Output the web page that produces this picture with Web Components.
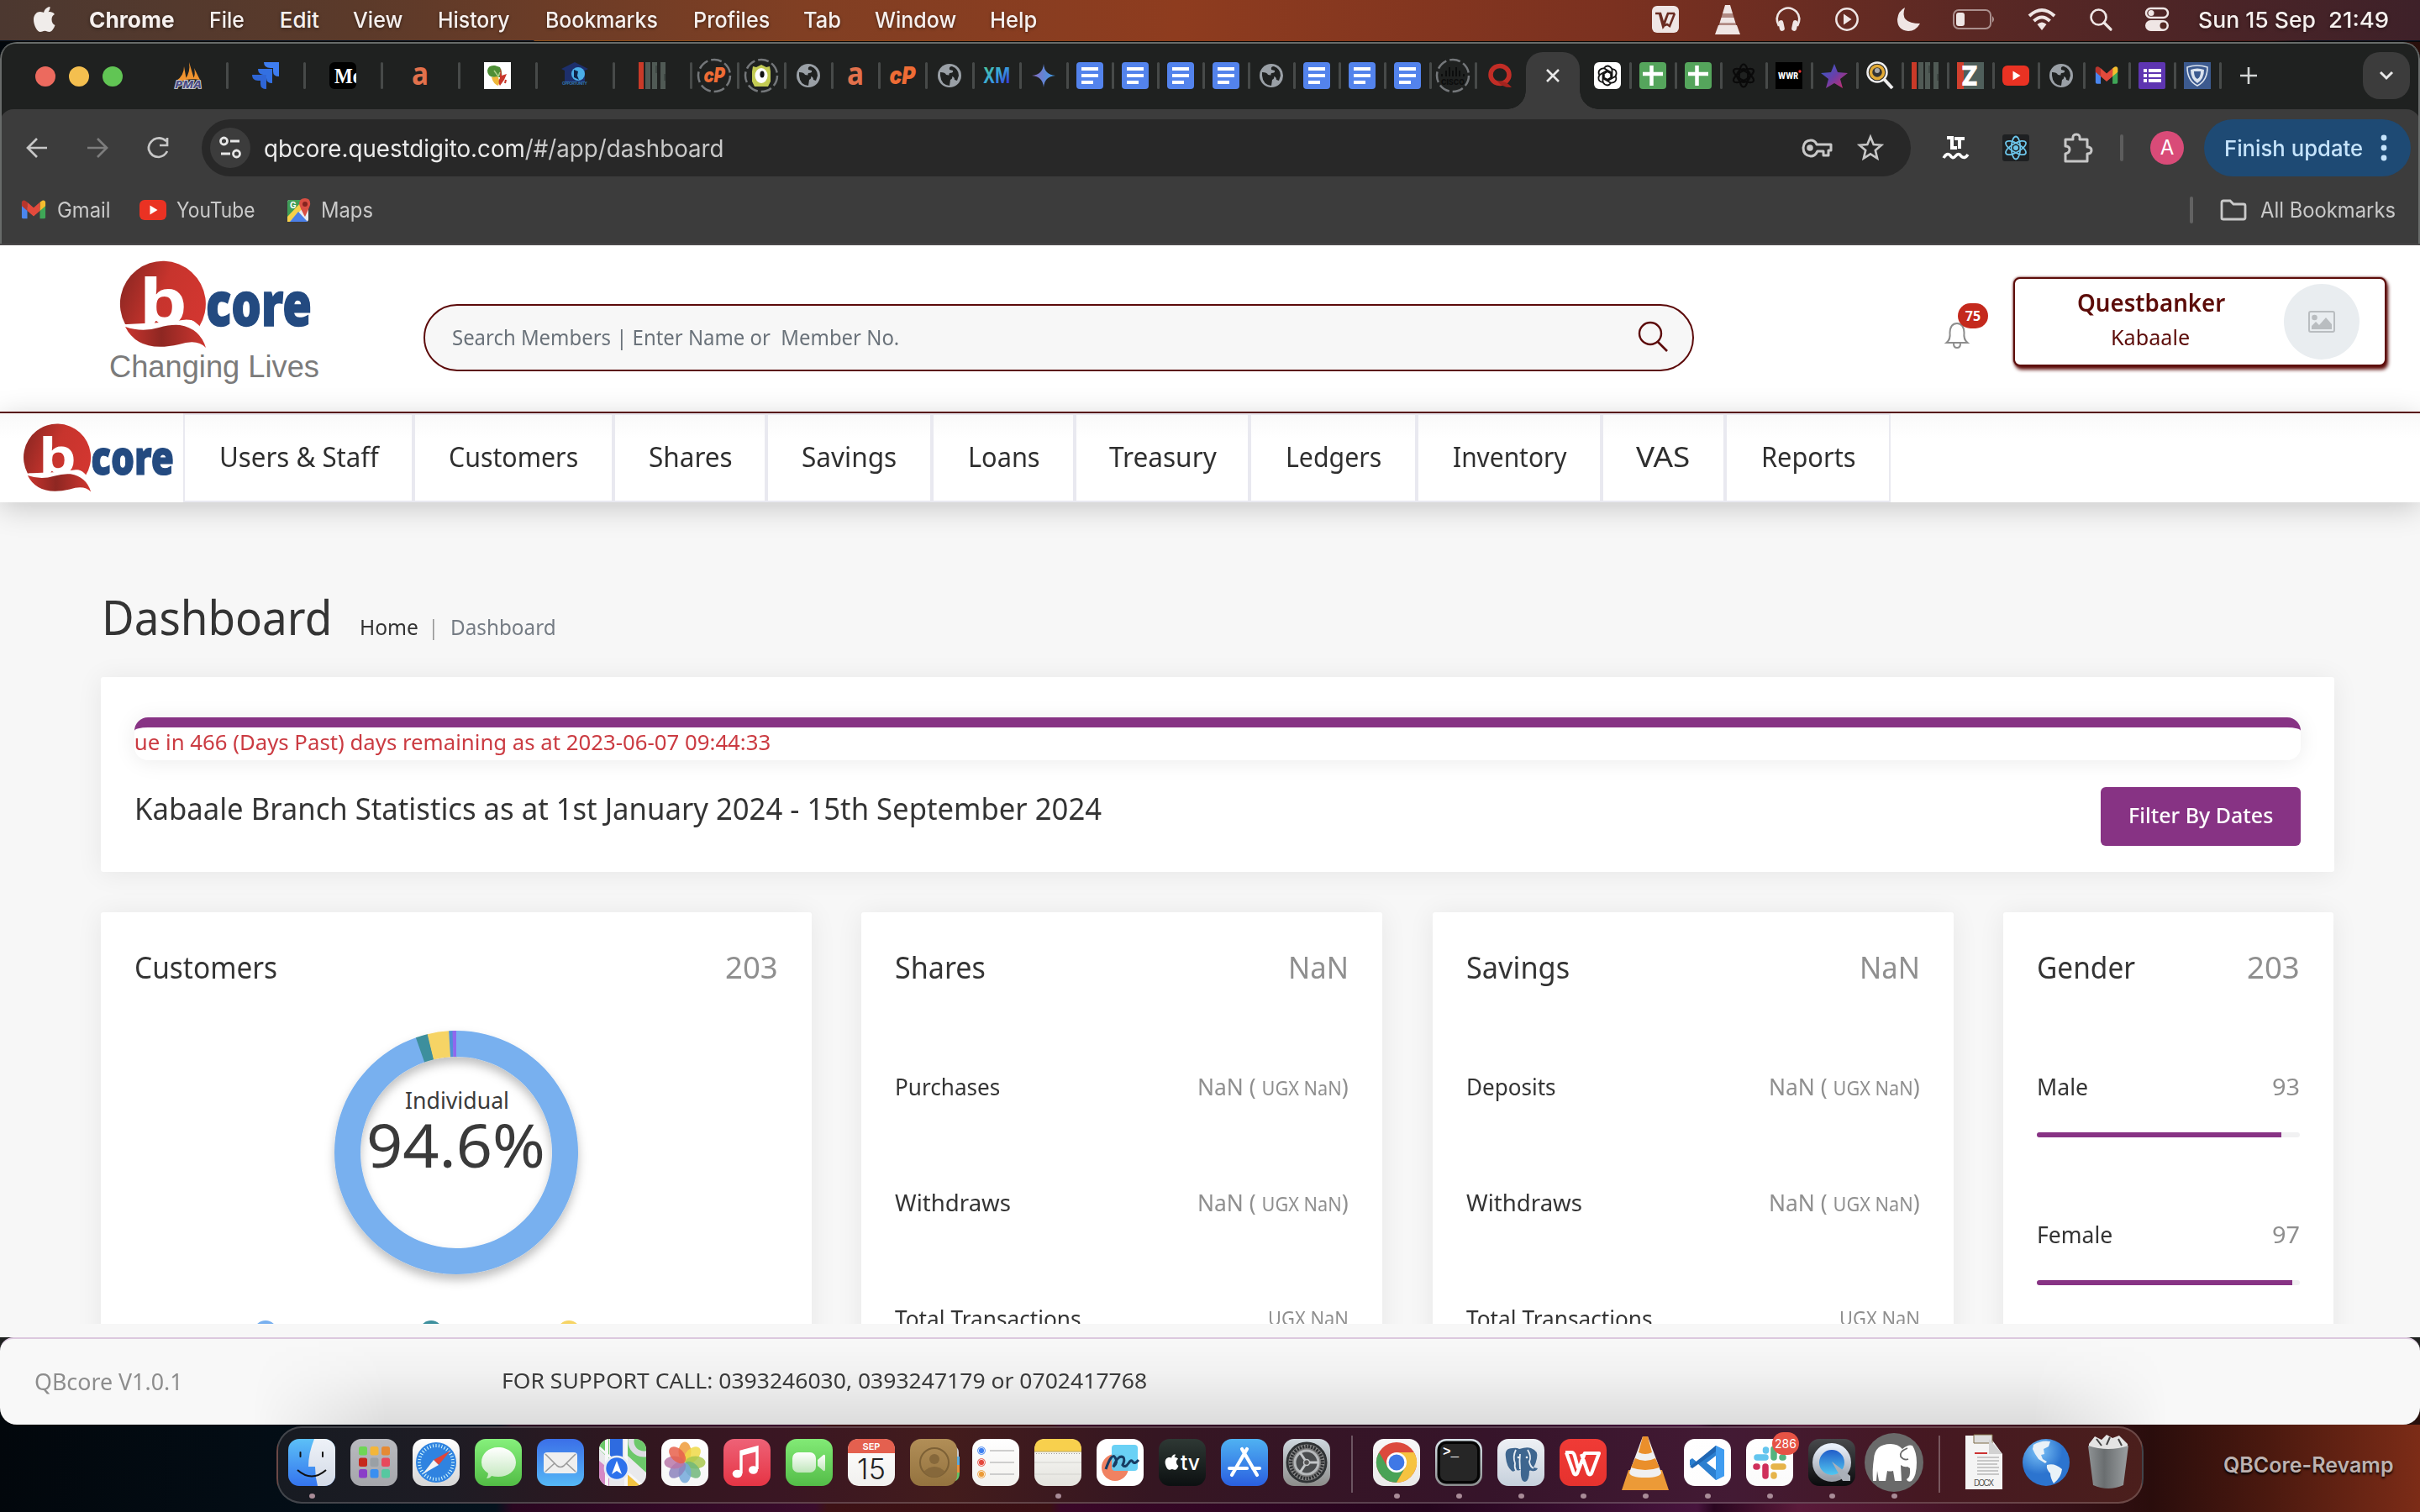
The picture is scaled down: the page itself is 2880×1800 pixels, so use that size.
<!DOCTYPE html>
<html lang="en">
<head>
<meta charset="utf-8">
<title>QBcore Dashboard</title>
<style>
html,body{margin:0;padding:0}
body{width:2880px;height:1800px;overflow:hidden;background:#08090f;font-family:"Noto Sans","Open Sans",sans-serif}
</style>
</head>
<body>
<mac-desktop></mac-desktop>
<script>
const UI='Inter,"Liberation Sans",sans-serif';
const PG='"Noto Sans","Open Sans",sans-serif';

/* ---------- helpers ---------- */
function svg(w,h,body,vb){return `<svg width="${w}" height="${h}" viewBox="${vb||`0 0 ${w} ${h}`}" style="display:block;flex:none;overflow:visible">${body}</svg>`}
/* text whose ink runs from x1 to x2 */
function T(text,x1,x2,size,extra=''){const b=size*.045;return {x:x1-b,w:x2-x1+b*1.7,html:(m,w)=>`<fit-text w="${w.toFixed(1)}" style="margin-left:${m.toFixed(1)}px;font-size:${size}px;${extra}">${text}</fit-text>`}}
function G(cx,w,html){return {x:cx-w/2,w,html:(m)=>`<div style="flex:none;width:${w}px;margin-left:${m}px">${html}</div>`}}
function row(items,start=0){let c=start,o='';for(const i of items){o+=i.html(i.x-c,i.w);c=i.x+i.w}return o}
function define(name,css,html,after){
  customElements.define(name,class extends HTMLElement{
    connectedCallback(){
      if(this.shadowRoot)return;
      const r=this.attachShadow({mode:'open'});
      r.innerHTML=`<style>:host{display:block;box-sizing:border-box}*{box-sizing:border-box}${css}</style>`+(typeof html==='function'?html(this):html);
      if(after)after(this,r);
    }
  });
}

/* ---------- fitted text ---------- */
define('fit-text',`:host{flex:none;white-space:pre}span{display:inline-block;transform-origin:0 50%}`,
 '<span><slot></slot></span>',
 (h,r)=>{const w=+h.getAttribute('w');h.style.width=w+'px';const s=r.querySelector('span');const n=s.offsetWidth;if(n)s.style.transform=`scaleX(${(w/n).toFixed(4)})`;});

/* ---------- glyph library ---------- */
const gmail=`<path d="M1 5v20q0 2 2 2h5V13z" fill="#4a86ee"/><path d="M31 5v20q0 2-2 2h-5V13z" fill="#3fa757"/><path d="M24 6l3-2q4-1 4 3v4l-7 6z" fill="#f5bd2e"/><path d="M8 6L5 4Q1 3 1 7v4l7 6z" fill="#b8352c"/><path d="M8 6l8 7 8-7v11l-8 7-8-7z" fill="#e34a3c"/>`;
const yt=`<rect x="0" y="4" width="32" height="24" rx="6" fill="#ea3223"/><path d="M12.500 10.500v11l9-5.500z" fill="#fff"/>`;
const doc=`<rect width="32" height="32" rx="4" fill="#5383ec"/><path d="M6 8h20M6 16h20M6 24h14" stroke="#fff" stroke-width="4"/>`;
const sheet=`<rect width="32" height="32" rx="4" fill="#55a55c"/><path d="M4 14h24M14.500 4v24" stroke="#fff" stroke-width="4.500"/>`;
const globe=`<circle cx="16" cy="16" r="14" fill="#9aa0a6"/><path d="M5 12q6 0 7 3l6 1q3 3-1 5l-1 7q-10-1-11-12zM19 5q8 3 8 11l-2 6-3-1q0-4-4-4-4-1-2-4 5 0 4-3l-4-1q-1-4 3-4z" fill="#1f2120"/>`;
const cp=`<text x="16" y="26" text-anchor="middle" textLength="31" lengthAdjust="spacingAndGlyphs" font-family="Inter" font-weight="900" font-style="italic" font-size="29" fill="#ee6c35">cP</text>`;
const aa=`<text x="16" y="27" text-anchor="middle" textLength="20" lengthAdjust="spacingAndGlyphs" font-family="Noto Sans" font-weight="700" font-size="38" fill="#e2714c">a</text>`;
const bars=`<rect width="6" height="32" fill="#c93a28"/><path d="M11 0v32M19 0v32M29 0v32" stroke="#505a55" stroke-width="6"/><path d="M21 4v9M31 14v8" stroke="#3f4844" stroke-width="2"/>`;
const dash=`<circle cx="16" cy="16" r="19" fill="none" stroke="#74777a" stroke-width="2.500" stroke-dasharray="13 4"/>`;
let gpt='';for(let i=0;i<6;i++)gpt+=`<path transform="rotate(${i*60} 16 16)" d="M12 7q3-4 7-1.500 3 2 2.500 5v7l-5 3" fill="none" stroke="#111" stroke-width="1.800"/>`;
const atom=(c,w=2)=>[0,60,120].map(a=>`<ellipse cx="16" cy="16" rx="13.500" ry="5.300" transform="rotate(${a+30} 16 16)" fill="none" stroke="${c}" stroke-width="${w}"/>`).join('');
const F={
 pma:`<path d="M2 22Q11 16 11 5l3 17zM12 21Q19 12 17 0l6 20zM22 20q3-6 1-13l7 14z" fill="#f0932f"/><text x="16" y="31" text-anchor="middle" textLength="32" lengthAdjust="spacingAndGlyphs" font-family="Noto Sans" font-weight="800" font-style="italic" font-size="13" fill="#4b4d87" stroke="#ddd" stroke-width="1.600" paint-order="stroke">PMA</text>`,
 jira:`<path d="M14 0h18v17q-7 0-7-6V7h-3q-8 0-8-7z" fill="#3e7df0"/><path d="M7 8h17v17q-7 0-7-6v-4h-4Q7 14 7 8z" fill="#3370e2"/><path d="M0 15h17v17q-7 0-7-6v-4H7q-7 0-7-7z" fill="#2f66d6"/>`,
 me:`<rect width="32" height="32" rx="6" fill="#000"/><svg width="32" height="32"><text x="6" y="25" font-family="Liberation Serif" font-weight="700" font-size="26" textLength="32" lengthAdjust="spacingAndGlyphs" fill="#fff">Me</text></svg>`,
 a:aa,
 map:`<rect width="32" height="32" fill="#fff"/><path d="M4 10Q5 3 13 4l6 2q3 6 2 12l-9 0q-8-1-8-8z" fill="#4d8f35"/><path d="M9 18l7-1q4 6 1 11-6-2-8-10z" fill="#efb83a"/><path d="M20 7l1 9 6-2-3 7-5 7q-3-5 0-9-1-6 1-12z" fill="#c9372a"/><path d="M12 10l5 7 2-5" stroke="#a9cf88" stroke-width="1.500" fill="none"/><path d="M25 25l1-4" stroke="#c9372a" stroke-width="2"/>`,
 sb:`<path d="M0 8L16 0l16 8-4 2v14H4V10z" fill="#1d2f6b"/><circle cx="20" cy="14" r="8" fill="#4aaee6"/><path d="M15 9l5 2-1 5 2 5-6-3z" fill="#102449"/><text x="16" y="27" text-anchor="middle" font-family="Inter" font-size="5" font-weight="700" textLength="30" fill="#2f6fae">OPPORTUNITY</text>`,
 bars,
 cpc:dash+`<g transform="translate(3 3) scale(.82)">${cp}</g>`,
 alien:dash+`<path d="M6 5l4 1 6-3 6 3 4-1 1 6v12l-3 6H8l-3-6V11z" fill="#c3cb53"/><ellipse cx="16" cy="16" rx="7.500" ry="9" fill="#fff"/><ellipse cx="17" cy="14.500" rx="2.600" ry="4" fill="#111"/>`,
 globe,cp,
 xm:`<defs><linearGradient id="xg" x1="0" y1="0" x2="1" y2="1"><stop offset="0" stop-color="#4fd08d"/><stop offset=".5" stop-color="#38a5e0"/><stop offset="1" stop-color="#3617d8"/></linearGradient></defs><text x="0" y="25" textLength="32" lengthAdjust="spacingAndGlyphs" font-family="Inter" font-weight="700" font-size="25" fill="url(#xg)">XM</text>`,
 gem:`<defs><linearGradient id="ge"><stop offset="0" stop-color="#8a6ac0"/><stop offset="1" stop-color="#3c9ee8"/></linearGradient></defs><path d="M16 2Q17 15 30 16 17 17 16 30 15 17 2 16 15 15 16 2z" fill="url(#ge)"/>`,
 doc,
 cisco:dash+`<path d="M3 14v3M8 10v7M12 6v11M16 10v7M20 6v11M24 10v7M29 14v3" stroke="#0c0d0d" stroke-width="2"/><text x="16" y="27" text-anchor="middle" textLength="28" lengthAdjust="spacingAndGlyphs" font-family="Inter" font-weight="800" font-size="9" fill="#0c0d0d">CISCO</text>`,
 q:`<ellipse cx="15" cy="15" rx="11" ry="10.500" fill="none" stroke="#c22d26" stroke-width="5.500"/><path d="M12 23q10-2 17 7-10 1-17-7z" fill="#a3241f"/>`,
 gpt:`<rect width="32" height="32" rx="6" fill="#fff"/>${gpt}`,
 sheet,
 atomd:atom('#0a0a0a',2.2)+`<circle cx="16" cy="16" r="8" fill="none" stroke="#0a0a0a" stroke-width="2"/>`,
 wwr:`<rect width="32" height="32" fill="#000"/><text x="3" y="20" textLength="24" lengthAdjust="spacingAndGlyphs" font-family="Inter" font-weight="800" font-size="11" fill="#fff">WWR</text><circle cx="29" cy="11" r="1.700" fill="#e33"/>`,
 star:`<defs><linearGradient id="st" x1="0" y1="0" x2="1" y2="1"><stop offset="0" stop-color="#2d5fd0"/><stop offset=".5" stop-color="#6a3fa8"/><stop offset="1" stop-color="#d62a62"/></linearGradient></defs><path d="M16 2l4 10 12 1-9 7 3 11-10-6-10 6 3-11-9-7 12-1z" fill="url(#st)"/>`,
 mag:`<circle cx="13" cy="12" r="11.500" fill="#222" stroke="#eee" stroke-width="2.500"/><circle cx="13" cy="12" r="7.500" fill="#333" stroke="#e3ab36" stroke-width="3.500"/><circle cx="13" cy="10" r="3" fill="#aaa"/><path d="M21 20l10 11" stroke="#eee" stroke-width="4"/>`,
 z:`<rect width="32" height="32" fill="#4f5f5b"/><rect width="8" height="32" fill="#d0402e"/><text x="15" y="28" text-anchor="middle" textLength="20" lengthAdjust="spacingAndGlyphs" font-family="Inter" font-weight="900" font-size="33" fill="#fff">Z</text>`,
 yt,gmail:`<g transform="translate(2 2) scale(.88)">${gmail}</g>`,
 forms:`<rect width="32" height="32" rx="2" fill="#5e35b1"/><path d="M12 10h15M12 16h15M12 22h15" stroke="#fff" stroke-width="4"/><path d="M6 10h4M6 16h4M6 22h4" stroke="#fff" stroke-width="4"/>`,
 shield:`<rect width="32" height="32" fill="#3c5a8f"/><path d="M4 6q12-4 24 0 0 16-12 22Q4 22 4 6z" fill="none" stroke="#dbe3ee" stroke-width="1.600"/><path d="M8 9q8-3 16 0 0 11-8 16Q8 20 8 9z" fill="#dbe3ee"/><path d="M12 11h8q0 7-4 9-4-2-4-9z" fill="#3c5a8f"/>`
};
const appleP=`<path d="M18.500 8.200c1.500-1.800 2.200-3.900 2-6.200-2.200.2-4.300 1.400-5.600 3-1.300 1.500-2.100 3.700-1.800 5.900 2.100.1 4.100-1.100 5.400-2.700zM22.500 17c0-3 1.600-4.800 3.500-6-1.500-2.200-3.800-3-6-3-2.500 0-3.600 1.200-5.500 1.200S11 8 8.700 8C5 8 1 11.300 1 17.500 1 24 5.300 32 9 32c2 0 2.900-1.300 5.400-1.300s3.100 1.300 5.300 1.300c3 0 5.700-4.500 6.800-8-2.400-1-4-3.600-4-7z"/>`;

/* ---------- menu bar ---------- */
define('mac-menubar',`:host{height:48px;background:linear-gradient(90deg,#4c3830 0,#5b3a2a 420px,#813f23 960px,#8e3c1f 1400px,#7b3120 1920px,#5a2824 2350px,#3e2129 2880px);font-family:${UI};color:#f6f0ee;text-shadow:0 1px 4px #0007}
.r{display:flex;height:46px;align-items:center}`,()=>{
 const ic='#efe6e5';
 return `<div class="r">`+row([
 G(53,28,svg(28,34,`<g fill="#f0ecea">${appleP}</g>`)),
 T('Chrome',107,207,26,'font-weight:700'),T('File',250,290,26,'font-weight:500'),T('Edit',334,379,26,'font-weight:500'),T('View',421,478,26,'font-weight:500'),T('History',522,606,26,'font-weight:500'),T('Bookmarks',650,782,26,'font-weight:500'),T('Profiles',826,915,26,'font-weight:500'),T('Tab',957,1000,26,'font-weight:500'),T('Window',1042,1137,26,'font-weight:500'),T('Help',1179,1233,26,'font-weight:500'),
 G(1982,32,svg(32,32,`<rect width="32" height="32" rx="6" fill="${ic}"/><path d="M4 9h6l4 14 5-14h8M9 9l4 15 6-15M13 24l5-2 3 2 6-15" fill="none" stroke="#6a2c22" stroke-width="2.600"/>`)),
 G(2056,32,svg(32,36,`<path d="M13 1h6l3 10H10zM8.500 16h15l2 6.500h-19zM5 25h22l4 11H1z" fill="${ic}"/><path d="M10 11h12l1.500 5h-15zM6.500 22.500h19l1 3h-21z" fill="${ic}" opacity=".5"/>`)),
 G(2128,30,svg(30,30,`<path d="M4 23Q-1 13 5 6q10-9 20 0 6 7 1 17" fill="none" stroke="${ic}" stroke-width="2.600"/><rect x="4" y="16" width="6" height="13" rx="3" fill="${ic}" transform="rotate(-12 7 22)"/><rect x="20" y="16" width="6" height="13" rx="3" fill="${ic}" transform="rotate(12 23 22)"/>`)),
 G(2198,30,svg(30,30,`<circle cx="15" cy="15" r="12.700" fill="none" stroke="${ic}" stroke-width="2.500"/><path d="M11 8.500v13l9.500-6.500z" fill="${ic}"/>`)),
 G(2271,30,svg(30,30,`<path d="M11 1Q4 20 29 20 24 29 15 29 2 28 2 15 3 5 11 1z" fill="${ic}"/>`)),
 G(2349,50,svg(50,24,`<rect x="1" y="1" width="44" height="22" rx="6" fill="none" stroke="${ic}" stroke-opacity=".55" stroke-width="2"/><rect x="4" y="4" width="10" height="16" rx="3" fill="${ic}"/><path d="M47 8q4 4 0 8z" fill="${ic}" opacity=".6"/>`)),
 G(2430,34,svg(34,26,`<g fill="none" stroke="${ic}" stroke-width="4"><path d="M2 9q15-14 30 0"/><path d="M7.500 15q9.500-9 19 0"/></g><path d="M11.500 19q5.500-5 11 0L17 26z" fill="${ic}"/>`)),
 G(2500,28,svg(28,28,`<circle cx="11.500" cy="11.500" r="9" fill="none" stroke="${ic}" stroke-width="2.600"/><path d="M18 18l8 8" stroke="${ic}" stroke-width="3.200" stroke-linecap="round"/>`)),
 G(2567,30,svg(30,28,`<rect x="2" y="1" width="26" height="11" rx="5.500" fill="none" stroke="${ic}" stroke-width="2.500"/><circle cx="8" cy="6.500" r="3.500" fill="${ic}"/><rect x="1" y="15" width="28" height="13" rx="6.500" fill="${ic}"/><circle cx="22.500" cy="21.500" r="4" fill="#532823"/>`)),
 T('Sun 15 Sep',2617,2755,26,'font-weight:500'),T('21:49',2772,2842,26,'font-weight:500')])+`</div>`});

/* ---------- tab strip ---------- */
define('tab-item',`:host{flex:none;height:100%;display:flex;align-items:center;justify-content:center;position:relative;padding-bottom:2px}
:host([sep])::after{content:"";width:3px;height:32px;border-radius:2px;background:#474a49;position:absolute;right:-2px;top:22px}`,
 h=>svg(32,32,F[h.getAttribute('icon')]),h=>{h.style.width=h.getAttribute('w')+'px'});
define('chrome-tabs',`:host{height:78px;display:flex;background:#1f2120}
.l{width:178px;flex:none;display:flex;gap:16px;padding-left:42px;align-items:center}.l i{width:24px;height:24px;border-radius:50%}
.act{width:64px;height:68px;margin-top:10px;background:#3c3c3c;border-radius:20px 20px 0 0;flex:none;display:flex;align-items:center;justify-content:center;position:relative;padding-bottom:13px}
.act::before,.act::after{content:"";position:absolute;bottom:0;width:22px;height:22px}
.act::before{left:-22px;background:radial-gradient(circle at 0 0,transparent 21.500px,#3c3c3c 22px)}
.act::after{right:-22px;background:radial-gradient(circle at 100% 0,transparent 21.500px,#3c3c3c 22px)}
.plus{width:68px;display:flex;align-items:center;justify-content:center;padding-bottom:2px}
.dd{width:56px;height:56px;border-radius:20px;background:#3c3c3c;margin:10px 12px 0 auto;display:flex;align-items:center;justify-content:center}`,()=>{
 const t=(n,w,s=1)=>`<tab-item icon="${n}" w="${w}" ${s?'sep':''}></tab-item>`;
 return `<div class="l"><i style="background:#ec6a5e"></i><i style="background:#f4bf4f"></i><i style="background:#61c554"></i></div>`
 +['pma','jira','me','a','map','sb','bars'].map(n=>t(n,92)).join('')
 +['cpc','alien','globe','a','cp','globe','xm','gem'].map(n=>t(n,56)).join('')
 +['doc','doc','doc','doc','globe','doc','doc','doc','cisco'].map(n=>t(n,54)).join('')
 +t('q',60,0)+`<div class="act">${svg(16,16,'<path d="M1 1l14 14M15 1L1 15" stroke="#e8e8e8" stroke-width="2.600"/>')}</div>`
 +`<div style="width:6px"></div>`+t('gpt',54)
 +['sheet','sheet','atomd','wwr','star','mag','bars','z','yt','globe','gmail','forms','shield'].map(n=>t(n,54)).join('')
 +`<div class="plus">${svg(20,20,'<path d="M10 0v20M0 10h20" stroke="#d4d6d5" stroke-width="2.600"/>')}</div><div class="dd">${svg(16,10,'<path d="M1 1l7 7 7-7" fill="none" stroke="#e8e8e8" stroke-width="3"/>')}</div>`});

/* ---------- toolbar ---------- */
define('chrome-toolbar',`:host{height:92px;background:#3c3c3c;border-radius:16px 16px 0 0;display:flex;align-items:center;font-family:${UI}}
.omni{height:68px;width:2034px;margin-left:13px;background:#282828;border-radius:34px;display:flex;align-items:center;flex:none}
.site{width:48px;height:48px;border-radius:50%;background:#3c3c3c;display:flex;align-items:center;justify-content:center}
.av{width:40px;height:40px;border-radius:50%;background:#d94b78;color:#fff;font-size:24px;line-height:40px;text-align:center;margin-left:32px;flex:none}
.up{width:246px;height:68px;border-radius:34px;background:#1e4a74;color:#c5e3fb;display:flex;align-items:center;margin-left:24px;flex:none}
.sp{width:26px;flex:none}`,()=>{
 const c='#c7c7c7';
 return row([
 G(44,26,svg(26,26,`<path d="M25 13H3M13 2L2 13l11 11" fill="none" stroke="${c}" stroke-width="2.700"/>`)),
 G(116,26,svg(26,26,`<path d="M1 13h22M13 2l11 11-11 11" fill="none" stroke="#7d7d7d" stroke-width="2.700"/>`)),
 G(188,26,svg(26,26,`<path d="M23 5q-7-6-15-2Q1 8 2 15q3 9 12 9 7-1 10-7M24 1v9h-9" fill="none" stroke="${c}" stroke-width="2.700"/>`))])
 +`<div class="sp"></div><div class="omni">`+row([
 G(34,48,`<div class="site">${svg(26,26,`<g fill="none" stroke="#e6e6e6" stroke-width="2.800"><circle cx="5.500" cy="5" r="4"/><path d="M13 5h11M2 20h11"/><circle cx="20.500" cy="20" r="4"/></g>`)}</div>`),
 T('qbcore.questdigito.com<span style="color:#c9c9c9">/#/app/dashboard</span>',75,620,29,'color:#ececec'),
 G(1922,36,svg(36,22,`<g fill="none" stroke="${c}" stroke-width="3"><path d="M18 7h17v7h-3v6h-6v-5h-7q-3 6-8 6-9-1-9-10 1-9 9-9 5 0 7 5z" stroke-linejoin="round"/></g><circle cx="10" cy="11" r="3.800" fill="${c}"/>`)),
 G(1986,32,svg(32,32,`<path d="M16 3l3.700 9 9.300.7-7.200 6.200 2.300 9.600-8.100-5.200-8.100 5.200 2.300-9.600L3 12.700l9.300-.7z" fill="none" stroke="${c}" stroke-width="2.600"/>`))])+`</div>`
 +row([
 G(2326,32,svg(32,32,`<path d="M6 4h6v12h6M15 5h12M21 5v12" stroke="#fff" stroke-width="4" fill="none"/><path d="M2 28q4-7 8-3 3 5 6 1 4-5 7 0 4 4 8-2" fill="none" stroke="#fff" stroke-width="3.500"/>`)),
 G(2398,32,svg(32,32,`<rect width="32" height="32" rx="3" fill="#1e2022"/>${atom('#6cc5ea',1.8).replace(/\+30/g,'')}<circle cx="16" cy="16" r="3" fill="#6cc5ea"/>`)),
 G(2471,36,svg(36,36,`<path d="M4 8h9q-1-6 4-6t4 6h9v9q5 0 5 4t-5 4v9H4v-9q5-1 5-5t-5-4z" fill="none" stroke="${c}" stroke-width="3" stroke-linejoin="round"/>`)),
 G(2524,4,`<div style="height:32px;background:#5d5d5d;border-radius:2px"></div>`)],2273)
 +`<div class="av">A</div><div class="up">`+row([T('Finish update',25,188,26,'font-weight:500'),G(214,8,svg(8,32,'<g fill="#c5e3fb"><circle cx="4" cy="4" r="3.400"/><circle cx="4" cy="16" r="3.400"/><circle cx="4" cy="28" r="3.400"/></g>'))])+`</div>`});

/* ---------- bookmarks ---------- */
define('bookmarks-bar',`:host{height:70px;background:#3c3c3c;border-bottom:2px solid #4a4849;padding-bottom:13px;display:flex;align-items:center;font-family:${UI};color:#c9c9c9}`,
 ()=>row([
 G(40,30,svg(30,30,gmail,'0 0 32 32')),T('Gmail',69,131,25),G(182,32,svg(32,32,yt)),T('YouTube',211,303,25),
 G(355,28,svg(28,30,`<rect x="1" y="3" width="25" height="26" rx="3" fill="#e9ecef"/><path d="M1 20V6q0-3 3-3h17L1 25z" fill="#3f9d57"/><path d="M1 29v-6L18 5l4 5L4 29z" fill="#f7d14a"/><path d="M4 29l10-12 11 12z" fill="#4a7fe8"/><path d="M15 8q0-7 7-7t6 8q-2 6-6 14-5-8-7-15z" fill="#d94f43"/><circle cx="22" cy="8" r="3" fill="#85241f"/><text x="4" y="13" font-size="10" font-family="Inter" font-weight="700" fill="#fff">G</text>`)),
 T('Maps',383,443,25),G(2608,4,`<div style="height:32px;background:#626262;border-radius:2px"></div>`),
 G(2658,32,svg(32,26,`<path d="M2 23V4q0-2 2-2h8l4 4h12q2 0 2 2v14q0 2-2 2H4q-2 0-2-1z" fill="none" stroke="#c9c9c9" stroke-width="2.800"/>`)),T('All Bookmarks',2691,2850,25)]));

/* ---------- brand logo ---------- */
define('brand-logo',`:host{flex:none;line-height:0}`,h=>{
 const s=+h.getAttribute('scale')||1,tag=h.hasAttribute('tagline');
 return svg(254*s,(tag?160:110)*s,`<defs><linearGradient id="g1" x1="0" y1=".3" x2="1" y2=".6"><stop offset="0" stop-color="#8c2722"/><stop offset=".5" stop-color="#c7342d"/><stop offset="1" stop-color="#d23630"/></linearGradient><linearGradient id="g2"><stop offset="0" stop-color="#c9342e"/><stop offset=".45" stop-color="#8e2722"/><stop offset="1" stop-color="#cf3630"/></linearGradient></defs>
 <path d="M24 81A51 51 0 1 1 112 84Q105 74 98 76Q70 84 24 81z" fill="url(#g1)"/>
 <text x="41" y="81" font-family="Noto Sans" font-weight="700" font-size="75" textLength="57" lengthAdjust="spacingAndGlyphs" fill="#fff">b</text>
 <path d="M26 81l20-1q26-1 46-4 15-3 23 11l-4 9Q98 80 80 85 50 92 26 82z" fill="#fff"/>
 <path d="M24 84q20 7 40 1 14-4 25-3 24 4 31 27-10-11-32-4Q40 116 24 84z" fill="url(#g2)"/>
 <text x="120" y="83" textLength="126" lengthAdjust="spacingAndGlyphs" font-family="Noto Sans" font-weight="900" font-size="73" fill="#234a80" stroke="#234a80" stroke-width="1.500">core</text>
 ${tag?`<text x="5" y="144" textLength="250" lengthAdjust="spacingAndGlyphs" font-family="Liberation Sans" font-size="36" fill="#7b7b7b">Changing Lives</text>`:''}`,`0 0 254 ${tag?160:110}`)});

/* ---------- page header ---------- */
define('user-card',`:host{width:444px;height:106px;border:2px solid #5d0d0a;border-radius:8px;background:#fff;box-shadow:2px 4px 4px #5d0d0a,0 0 3px #5d0d0a;display:flex;color:#5c0c09;flex:none}
.n{width:320px;padding-top:8px}.row{display:flex;line-height:41px}
.av{width:90px;height:90px;border-radius:50%;background:#e9edf0;margin:6px 0 0 0;display:flex;align-items:center;justify-content:center}`,
 ()=>`<div class="n"><div class="row">${row([T('Questbanker',75,249,28,'font-weight:600')])}</div><div class="row">${row([T('Kabaale',115,207,26)])}</div></div>
 <div class="av">${svg(32,26,'<rect x="1" y="1" width="30" height="24" rx="2" fill="none" stroke="#b9bdc0" stroke-width="2"/><circle cx="7.500" cy="8" r="3.300" fill="#b9bdc0"/><path d="M4 22v-4l5-5 4 4 8-9 7 8v6z" fill="#b9bdc0"/>')}</div>`);
define('bank-header',`:host{height:200px;background:#fff;border-bottom:2px solid #5c0a0a;display:flex}
brand-logo{margin:13px 0 0 125px}
.s{width:1512px;height:80px;border:2px solid #5c0a0a;border-radius:40px;background:#f7f7f7;margin:70px 0 0 125px;display:flex;align-items:center;color:#6a727a;flex:none;padding-bottom:2px}
.bell{width:60px;margin:66px 0 0 299px;position:relative;flex:none}
.bell svg{margin:24px 0 0 0}.badge{position:absolute;left:15px;top:3px;width:36px;height:30px;border-radius:15px;background:#c4291d;color:#fff;font-weight:700;font-size:16px;line-height:30px;text-align:center}
user-card{margin:38px 0 0 21px}`,
 ()=>`<brand-logo tagline></brand-logo><div class="s">${row([T('Search Members | Enter Name or  Member No.',33,563,25),G(1462,38,svg(38,38,'<circle cx="15" cy="15" r="13" fill="none" stroke="#5c0a0a" stroke-width="2.400"/><path d="M24 25l11 11" stroke="#5c0a0a" stroke-width="2.600"/>'))])}</div>
 <div class="bell">${svg(28,34,'<path d="M1.500 26q5-4 4-12Q6 3 14 3t8.500 11q-1 8 4 12zM10 27q0 5 4 5t4-5" fill="none" stroke="#8d8d8d" stroke-width="2"/>')}<div class="badge">75</div></div><user-card></user-card>`);

/* ---------- navigation ---------- */
define('nav-item',`:host{height:106px;border:2px solid #e9e9f0;flex:none;display:flex;line-height:100px;color:#2f2f2f}`,'<slot></slot>');
define('bank-nav',`:host{height:106px;background:linear-gradient(#f9f9f9,#fff 30px);display:flex;box-shadow:0 6px 34px rgba(0,0,0,.2);position:relative;z-index:2}
.lg{width:218px;padding:8px 0 0 14px;flex:none}`,()=>{
 const n=[['Users &amp; Staff',218,492,262,449],['Customers',492,730,535,687],['Shares',730,912,773,870],['Savings',912,1109,955,1066],['Loans',1109,1279,1153,1236],['Treasury',1279,1487,1321,1446],['Ledgers',1487,1686,1531,1643],['Inventory',1686,1906,1730,1863],['VAS',1906,2053,1948,2010],['Reports',2053,2250,2097,2207]];
 return `<div class="lg"><brand-logo scale=".785"></brand-logo></div>`+n.map(a=>`<nav-item style="width:${a[2]-a[1]}px">${row([T(a[0],a[3]-a[1]-2,a[4]-a[1]-2,32)])}</nav-item>`).join('')});

/* ---------- dashboard ---------- */
define('panel-card',`:host{background:#fff;border-radius:3px;box-shadow:0 2px 32px rgba(0,0,0,.07);padding:42px 40px 0;flex:none}`,'<slot></slot>');
define('stat-row',`:host{display:flex;justify-content:space-between;height:40px;line-height:40px;color:#8f8f8f}`,
 '<slot name="l"></slot><slot name="r"></slot>');
define('meter-bar',`:host{height:6px;border-radius:3px;background:#f1f1f2;overflow:hidden;margin:35px 0 95px}div{height:6px;background:#873384}`,h=>`<div style="width:${h.getAttribute('v')}%"></div>`);
define('donut-chart',`:host{height:400px;overflow:hidden}`,()=>{
 const C=[383,196],p=(a,r)=>{const t=a*Math.PI/180;return (C[0]+r*Math.sin(t)).toFixed(2)+' '+(C[1]-r*Math.cos(t)).toFixed(2)};
 const seg=(a,b,c)=>`<path d="M${p(a,145)}A145 145 0 ${b-a>180?1:0} 1 ${p(b,145)}L${p(b,114)}A114 114 0 ${b-a>180?1:0} 0 ${p(a,114)}z" fill="${c}"/>`;
 return svg(766,400,`<defs><filter id="sh" x="-20%" y="-20%" width="140%" height="140%"><feDropShadow dx="0" dy="7" stdDeviation="6" flood-opacity=".25"/></filter></defs><g filter="url(#sh)">${seg(0,341,'#78b0ef')}${seg(340.6,346.5,'#3d8f9d')}${seg(346.3,356.6,'#f6d465')}${seg(356.5,358.4,'#4f90d6')}${seg(358.2,360,'#8f68ee')}</g>
 <g fill="#3a3a3a" font-family='${PG}'><text x="322" y="144" font-size="28" textLength="124" lengthAdjust="spacingAndGlyphs">Individual</text><text x="276" y="214" font-size="72" textLength="213" lengthAdjust="spacingAndGlyphs">94.6%</text></g>
 <circle cx="156" cy="410" r="14" fill="#78b0ef" /><circle cx="353" cy="410" r="14" fill="#3d8f9d"/><circle cx="517" cy="410" r="14" fill="#f6d465"/>`)});
define('dash-board',`:host{height:994px;background:#f7f7f7;color:#343434}
.clip{height:978px;overflow:hidden}
.title{display:flex;align-items:baseline;padding-top:101px;height:208px;line-height:70px}
.info{margin-left:120px;width:2658px;height:232px;padding-top:48px}
.notice{height:51px;border-top:12px solid #873384;border-radius:16px;box-shadow:0 2px 26px rgba(0,0,0,.08);overflow:hidden;line-height:35px;color:#cb3b42;display:flex}
.tr{display:flex;justify-content:space-between;margin-top:33px;line-height:49px}
.btn{width:238px;height:70px;border-radius:6px;background:#873384;color:#fff;line-height:66px;display:flex;margin-top:-1px}
.cards{display:flex;margin:48px 0 0 120px;gap:59.3px}.cards panel-card{height:560px}
.hd{display:flex;justify-content:space-between;line-height:48px;height:48px;color:#8f8f8f}
.gap{height:97px}.gap2{height:98px}`,()=>{
 const f=(t,w,s,x='')=>`<fit-text w="${w}" style="font-size:${s}px;${x}">${t}</fit-text>`;
 const D='color:#343434';
 const hd=(a,aw,b,bw)=>`<div class="hd">${f(a,aw,36,D)}${f(b,bw,36)}</div>`;
 const sr=(a,aw,b,bw,bs=28)=>`<stat-row><fit-text slot="l" w="${aw}" style="font-size:28px;${D}">${a}</fit-text><fit-text slot="r" w="${bw}" style="font-size:${bs}px">${b}</fit-text></stat-row>`;
 const N='NaN ( <span style="font-size:23px">UGX NaN</span>)',g='<div class="gap"></div>',g2='<div class="gap2"></div>';
 const col=(w,t,tw,r,rw)=>`<panel-card style="width:${w}px">${hd(t,tw,'NaN',72)}${g}${sr(r,rw,N,180)}${g2}${sr('Withdraws',138,N,180)}${g2}${sr('Total Transactions',222,'UGX NaN',96,23)}</panel-card>`;
 return `<div class="clip"><div class="title">${row([T('Dashboard',123,393,56),T('Home',429,497,26),T('|',514,518,25),T('Dashboard',537,661,26,'color:#757c84')])}</div>
 <panel-card class="info"><div class="notice"><fit-text w="773" style="font-size:26px;margin-left:-16px">due in 466 (Days Past) days remaining as at 2023-06-07 09:44:33</fit-text></div>
 <div class="tr">${f('Kabaale Branch Statistics as at 1st January 2024 - 15th September 2024',1151,36)}<div class="btn">${row([T('Filter By Dates',34,204,25,'font-weight:500')])}</div></div></panel-card>
 <div class="cards"><panel-card style="width:846px">${hd('Customers',170,'203',63)}<donut-chart></donut-chart></panel-card>
 ${col(620,'Shares',108,'Purchases',125)}${col(620,'Savings',123,'Deposits',107)}
 <panel-card style="width:393px">${hd('Gender',117,'203',63)}${g}${sr('Male',61,'93',33)}<meter-bar v="93"></meter-bar>${sr('Female',90,'97',33)}<meter-bar v="97"></meter-bar></panel-card></div></div>`});

define('page-footer',`:host{height:104px;background:#f8f8f8;border-top:2px solid #dcc8de;border-radius:16px 16px 0 0;position:relative;overflow:hidden;line-height:40px;color:#3a3a3a}
.r{display:flex;padding-top:29px;position:relative}
.shade{position:absolute;left:300px;right:300px;top:0;bottom:0;background:linear-gradient(#0000,#00000007 40%,#0000001c);-webkit-mask-image:linear-gradient(90deg,#0000,#000 160px,#000 calc(100% - 160px),#0000)}`,
 ()=>`<div class="shade"></div><div class="r">${row([T('QBcore V1.0.1',42,216,28,'color:#8d8d8d;position:relative;top:1px'),T('FOR SUPPORT CALL: 0393246030, 0393247179 or 0702417768',598,1364,26)])}</div>`);

/* ---------- dock ---------- */
const lg=(id,a,b)=>`<linearGradient id="${id}" x1="0" y1="0" x2="0" y2="1"><stop offset="0" stop-color="${a}"/><stop offset="1" stop-color="${b}"/></linearGradient>`;
const tile=(a,b)=>`<defs>${lg('t',a,b)}</defs><rect width="56" height="56" rx="13" fill="url(#t)"/>`;
let ticks='';for(let i=0;i<36;i++)ticks+=`<path d="M28 6v4" stroke="#dff" stroke-width="1" transform="rotate(${i*10} 28 28)"/>`;
const petals=['#ef9b3a','#efd946','#a9c84e','#71b77a','#74a9db','#8c82bd','#b977a8','#e8604b'].map((c,i)=>`<ellipse cx="28" cy="15.500" rx="7.500" ry="12" fill="${c}" opacity=".85" transform="rotate(${i*45} 28 28)"/>`).join('');
const pad=['#6fd656','#f3b63a','#e58a34','#c6271c','#9aa0a5','#e8485c','#8a3dc8','#3a8ff0','#56c8a0'].map((c,i)=>`<rect x="${10+(i%3)*13.500}" y="${9+Math.floor(i/3)*13.500}" width="10" height="10.500" rx="2.500" fill="${c}"/>`).join('');
const A={
finder:`<defs>${lg('a','#5cc0f7','#3474ee')}${lg('b','#eef2f8','#d3dae6')}<clipPath id="c"><rect width="56" height="56" rx="13"/></clipPath></defs><g clip-path="url(#c)"><rect width="56" height="56" fill="url(#a)"/><path d="M31 0Q24 17 24 33h8q0 12 3 23h21V0z" fill="url(#b)"/></g><path d="M14.500 16v5M41 16v5" stroke="#111" stroke-width="2" stroke-linecap="round"/><path d="M11 37q17 15 34 0" fill="none" stroke="#111" stroke-width="2"/>`,
pad:tile('#b9babf','#a5a6ab')+pad,
safari:tile('#fff','#d6d6d6')+`<circle cx="28" cy="28" r="24" fill="#2f83e0"/>${ticks}<path d="M45 14L31 31l-6-6z" fill="#e0453a"/><path d="M12 42l13-17 6 6z" fill="#f3f3f3"/>`,
msg:tile('#86f07c','#52bd45')+`<defs>${lg('m','#fff','#c4e8be')}</defs><path d="M28 10c12 0 21 8 21 18s-9 17-21 17q-5 0-8-1-2 3-6 3 2-3 2-6-8-5-8-13C8 18 16 10 28 10z" fill="url(#m)"/>`,
mail:tile('#3b6fe8','#56b8f6')+`<rect x="8" y="16" width="40" height="25" rx="4" fill="#efefef"/><path d="M10 18l14 14q4 3 8 0l14-14M10 39l11-10M46 39L35 29" fill="none" stroke="#9a9a9a" stroke-width="1.600"/>`,
maps:`<defs><clipPath id="c"><rect width="56" height="56" rx="13"/></clipPath></defs><g clip-path="url(#c)"><rect width="56" height="56" fill="#e9e9ec"/><path d="M0 0h12v24L0 12zM34 0h22v40L34 20z" fill="#6cc86a"/><path d="M0 26l12 10v20H0z" fill="#d489c5"/><path d="M32 40l20 16H30z" fill="#f3c443"/><circle cx="53" cy="3" r="15" fill="none" stroke="#dcdce2" stroke-width="7"/><rect x="13" width="15" height="30" fill="#2e6be0"/><path d="M9 0v56M32 0v56" stroke="#f7f7f9" stroke-width="4"/><path d="M0 10l56 50" stroke="#f7f7f9" stroke-width="3"/></g><circle cx="21" cy="35" r="14" fill="#2d71ec" stroke="#e8ecf4" stroke-width="2.600"/><path d="M21 26l6 16-6-4-6 4z" fill="#fff"/>`,
photos:tile('#fff','#f6f6f6')+petals,
music:tile('#ee6277','#e63444')+`<path d="M21 41V15l19-5v26" fill="none" stroke="#fff" stroke-width="3.400"/><path d="M21 15l19-5v5l-19 5z" fill="#fff"/><ellipse cx="16.500" cy="41.500" rx="5.800" ry="4.800" fill="#fff"/><ellipse cx="35.500" cy="37" rx="5.500" ry="4.800" fill="#fff"/>`,
ft:tile('#82ea76','#54bd48')+`<defs>${lg('m','#fff','#c0e6bb')}</defs><rect x="8" y="16" width="28" height="24" rx="7" fill="url(#m)"/><path d="M38 25l7-6q2-1 2 2v15q0 3-2 2l-7-6z" fill="url(#m)"/>`,
cal:tile('#fff','#f1f0ee')+`<path d="M0 17V13Q0 0 13 0h30q13 0 13 13v4z" fill="#e4604f"/><text x="28" y="13" text-anchor="middle" font-family="Inter" font-size="11" font-weight="600" fill="#fff">SEP</text><text x="28" y="48" text-anchor="middle" font-family="Inter" font-size="34" font-weight="300" textLength="34" fill="#222">15</text>`,
contacts:`<path d="M50 8q8 1 8 8v24q0 8-8 10z" fill="#ccc"/><path d="M50 21h9v10h-9z" fill="#58a9dd"/><path d="M50 31h9v9h-9z" fill="#e8913a"/><path d="M50 40h9q0 8-5 10h-4z" fill="#64c466"/>`+tile('#b18e57','#94733f')+`<circle cx="29" cy="28" r="17" fill="none" stroke="#7d6136" stroke-width="2"/><circle cx="29" cy="24" r="6" fill="#86683b"/><path d="M16 39q13-12 26 0-13 13-26 0z" fill="#86683b"/>`,
rem:tile('#fff','#f2f1ee')+[['#3d7ff0',14],['#e4483d',28],['#eb9a35',42]].map(a=>`<circle cx="11" cy="${a[1]}" r="3.800" fill="${a[0]}" stroke="${a[0]}" stroke-width="2"/><circle cx="11" cy="${a[1]}" r="3.700" fill="none" stroke="#fff" stroke-width=".8"/><path d="M21 ${a[1]}h29" stroke="#c4c4c4" stroke-width="1.600"/>`).join(''),
notes:tile('#fbfbf9','#e4e3de')+`<path d="M0 15v-2Q0 0 13 0h30q13 0 13 13v2z" fill="#f8d04d"/><path d="M0 15h56" stroke="#bda456"/><path d="M0 28h56M0 42h56" stroke="#d4d3cf"/><path d="M2 17.500h52" stroke="#999" stroke-dasharray="1 2"/>`,
free:tile('#fff','#fff')+`<circle cx="22" cy="34" r="16" fill="#f08262"/><rect x="18" y="7" width="31" height="31" rx="4" fill="#5fcdf4" opacity=".93"/><path d="M11 36q7-20 11-14t-2 11q6-15 12-11 2 3-1 9 3 4 7-2 3-5 5-2 2 4 7-2" fill="none" stroke="#173c63" stroke-width="3"/>`,
tv:tile('#2e3834','#0c1011')+`<g fill="#fff" transform="translate(7 17) scale(.62)">${appleP}</g><text x="26" y="37" font-family="Inter" font-size="25" font-weight="500" textLength="23" lengthAdjust="spacingAndGlyphs" fill="#fff">tv</text>`,
store:tile('#4fb2f2','#2a5fe0')+`<g stroke="#fff" stroke-width="4.200" stroke-linecap="round" fill="none"><path d="M31 12L13 43M25 12l18 31M10 35h21M38 35h8"/></g>`,
set:tile('#cfd8df','#8c8c8a')+`<circle cx="28" cy="28" r="23" fill="#8d8d8d" stroke="#2f3234" stroke-width="3"/><circle cx="28" cy="28" r="19" fill="#777" stroke="#2b2d2f" stroke-width="4" stroke-dasharray="2 1.500"/><circle cx="28" cy="28" r="14" fill="#4a4c4e" stroke="#b5b8ba" stroke-width="3"/><path d="M28 28h14M28 28l-8-12M28 28l-8 12" stroke="#c3c6c8" stroke-width="3"/><circle cx="28" cy="28" r="3.500" fill="#555" stroke="#c3c6c8" stroke-width="1.500"/>`,
chrome:tile('#f8f8f8','#e9e9e9')+`<circle cx="28" cy="28" r="24" fill="#dc4a3d"/><path d="M7.200 16A24 24 0 0 0 28 52l10.400-18L17.600 34z" fill="#49a356"/><path d="M28 52A24 24 0 0 0 48.800 16H28l10.400 18z" fill="#f6c340"/><circle cx="28" cy="28" r="12" fill="#fff"/><circle cx="28" cy="28" r="9.400" fill="#3f78e6"/>`,
term:tile('#d9e4ea','#8d8f90')+`<rect x="2.500" y="2.500" width="51" height="51" rx="11" fill="#050505"/><rect x="6" y="6" width="44" height="44" rx="7" fill="#262626"/><text x="9" y="20" font-family="Liberation Mono" font-weight="700" font-size="16" fill="#fff">&gt;_</text>`,
pg:tile('#eef1f5','#c6d0dc')+`<path d="M10 22q-2-11 8-11 5-1 8 1 9-3 14-1 9 3 7 12-1 6-4 11l5 1q-2 4-7 3-2-1-3 0 0 12-5 13-6 0-5-15-3 3-6 0-2 4-5 2-6-5-7-16z" fill="#3e668f"/><path d="M22 13q-4 8-1 16-1 5 1 8M36 13q5 8 2 14 1 6 5 8M27 36q-1-10 0-18" fill="none" stroke="#e6ecf2" stroke-width="1.800"/><circle cx="25" cy="22" r="1.300" fill="#fff"/><circle cx="35" cy="22" r="1.300" fill="#fff"/>`,
wps:tile('#f03b36','#e6322e')+`<path d="M7 16h7q3 0 4 4l4 15M8 16l9 25q2 3 4 0l9-24h17l-9 24q-2 3-4 0l-8-23" fill="none" stroke="#fff" stroke-width="4.200" stroke-linejoin="round"/>`,
vlc:`<path d="M8 37h40l8 24H0z" fill="#ec9a37"/><path d="M25 -3h6l16 43q-1 6-19 6T9 40z" fill="#f0f0f0"/><path d="M25 -3h6l5 19q-8 4-16 0zM16 23q12 6 24 0l5 11q-17 6-34 0z" fill="#ea8f2b"/>`,
code:tile('#fff','#fdfdfd')+`<path d="M38 8l10 5v31l-10 5L16 29l-6 5-3-3V25l3-2 6 5z" fill="#2b7fd0"/><path d="M38 8L7 33l3 2 28-20z" fill="#1f66b3"/><path d="M38 8l10 5v31l-10 5z" fill="#3f9cf0"/><path d="M38 20v17L27 28.500z" fill="#fff"/>`,
slack:tile('#fff','#fbfbfb')+`<g stroke-width="7.500" stroke-linecap="round"><path d="M13 22h10M23.500 13v1" stroke="#63c5ee"/><path d="M33 12v10M43 22h1" stroke="#54b37f"/><path d="M33 33h11M33 43v1" stroke="#e6b44a"/><path d="M23 33v11M13 33h-1" stroke="#cf2f5b"/></g>`,
qt:tile('#48494c','#0a0b0d')+`<defs>${lg('q','#e8effa','#9aa0aa')}${lg('r','#1b4fc4','#58d5f5')}</defs><circle cx="28" cy="28" r="19" fill="url(#r)" stroke="url(#q)" stroke-width="8"/><path d="M28 27l22 17v6h-9z" fill="#aab0b9"/>`,
mamp:`<circle cx="28" cy="28" r="35" fill="#6a6a6a"/><path d="M4 24Q5 6 24 6q9 0 14 6 7-6 12-4 5 8 5 20 0 16-6 22-5 2-6-2 5-2 4-13l-3-2q-4 1-8-2l1 19h-8l-2-12q-4 1-7 0l-2 12h-8l-2-12-1 12h-4Q2 36 4 24z" fill="#fff"/><path d="M44 11q-10 4-8 10 4 5 9 3" fill="none" stroke="#6a6a6a" stroke-width="1.800"/>`,
docx:`<path d="M6 -4h28l16 22v42H6z" fill="#f4f4f4"/><path d="M16 -5h22v10H16z" fill="#ddd" stroke="#7c6a45" stroke-width="1"/><path d="M34 0l16 18H34z" fill="#d2d2d2"/><path d="M17 17h15" stroke="#c33" stroke-width="2"/><path d="M20 22h26M20 26h26M20 30h24M20 34h26M20 38h25M20 42h26" stroke="#999" stroke-width="1.200"/><text x="28" y="56" text-anchor="middle" font-family="Inter" font-size="10" textLength="24" fill="#555">DOCX</text>`,
earth:`<defs><radialGradient id="e" cx=".35" cy=".25"><stop offset="0" stop-color="#7cc4f8"/><stop offset="1" stop-color="#2c74cf"/></radialGradient></defs><circle cx="28" cy="28" r="28" fill="url(#e)"/><path d="M13 7q10-6 20-4l-2 6-6 3 1 6-4 1 2 5 5 3-2 2-8-5-4-6-3-6zM29 31q9-3 18 5-1 10-10 17-4-7-4-12-5-5-4-10z" fill="#e9f2f8"/>`,
trash:`<defs><linearGradient id="w"><stop offset="0" stop-color="#8e9294"/><stop offset=".4" stop-color="#6a6e70"/><stop offset="1" stop-color="#9b9fa1"/></linearGradient></defs><path d="M5 6L12-3l8 4 6-6 7 4 8-3 10 10v6H5z" fill="#e4e4e4"/><path d="M14 0l6 8M30-2l-4 9M40 0l4 8" stroke="#444" stroke-width="2"/><path d="M4 8q24 8 48 0l-6 47q-18 8-36 0z" fill="url(#w)"/>`
};
define('dock-app',`:host{width:74px;height:72px;flex:none;display:flex;flex-direction:column;align-items:center;padding-top:1px;position:relative}
i{width:7px;height:8px;border-radius:50%;background:#a98c98;margin-top:9px}
b{position:absolute;right:2px;top:-7px;width:32px;height:27px;border-radius:14px;background:#e65345;color:#fff;font:400 14px/27px ${UI};text-align:center}`,
 h=>svg(56,56,A[h.getAttribute('icon')])+(h.hasAttribute('run')?'<i></i>':'')+(h.getAttribute('badge')?`<b>${h.getAttribute('badge')}</b>`:''));
define('mac-dock',`:host{height:104px;padding-top:2px;display:flex;background:linear-gradient(90deg,#02070c,#04121d 590px,#2a0620 610px,#3a0c2c 970px,#3d1215 985px,#3a1014 1250px,#3a0728 1262px,#25051d 1700px,#47143d 2020px,#2a0620 2040px,#5a1a3a 2140px,#2a0d0c 2560px,#4b190f 2700px,#7c2c17 2880px)}
.d{width:2222px;height:92px;margin-left:329px;border-radius:30px;border:2px solid #ffffff30;background:linear-gradient(90deg,#171b22,#1e1c24 9%,#32161f 20%,#3a1623 27%,#431c1c 36%,#351622 47%,#36142a 65%,#431a34 78%,#451822 88%,#4b1f1c);display:flex;padding:12px 3px 0;flex:none}
hr{width:2px;height:68px;margin:-3px 15.500px 0;border:0;background:#ffffff45;flex:none}
.t{font:600 25px/92px ${UI};color:#bdb2b1;text-shadow:0 2px 3px #000;margin-left:95px}`,()=>{
 const a=(n,r,x='')=>`<dock-app icon="${n}" ${r?'run':''} ${x}></dock-app>`;
 return `<div class="d">${a('finder',1)}${['pad','safari','msg','mail','maps','photos','music','ft','cal','contacts','rem'].map(n=>a(n)).join('')}${a('notes',1)}${['free','tv','store','set'].map(n=>a(n)).join('')}<hr>${['chrome','term','pg','wps','vlc','code'].map(n=>a(n,1)).join('')}${a('slack',1,'badge="286"')}${a('qt',1)}${a('mamp',1)}<hr>${a('docx')}${a('earth')}${a('trash')}</div><fit-text class="t" w="202">QBCore-Revamp</fit-text>`});

/* ---------- shell ---------- */
define('browser-window',`:host{height:1646px;border-top:2px solid #676b69;border-radius:20px;overflow:hidden;background:#1f2120;position:relative}
.edge{position:absolute;left:0;right:0;top:0;height:238px;border:1px solid #686b6a;border-width:0 2px;border-radius:18px 18px 0 0;pointer-events:none}`,
 `<chrome-tabs></chrome-tabs><chrome-toolbar></chrome-toolbar><bookmarks-bar></bookmarks-bar><bank-header></bank-header><bank-nav></bank-nav><dash-board></dash-board><page-footer></page-footer><div class="edge"></div>`);
define('mac-desktop',`:host{width:2880px;height:1800px;overflow:hidden;background:linear-gradient(90deg,#02070c 0 2400px,#2a100c 2880px)}
.gap{height:2px;background:linear-gradient(90deg,#061525 635px,#8a4f1c 636px,#8a3c1b 1500px,#471c1a 2700px,#0a1322 2750px);border-bottom:1px solid #080808}`,
 `<mac-menubar></mac-menubar><div class="gap"></div><browser-window></browser-window><mac-dock></mac-dock>`);
</script>
</body>
</html>
